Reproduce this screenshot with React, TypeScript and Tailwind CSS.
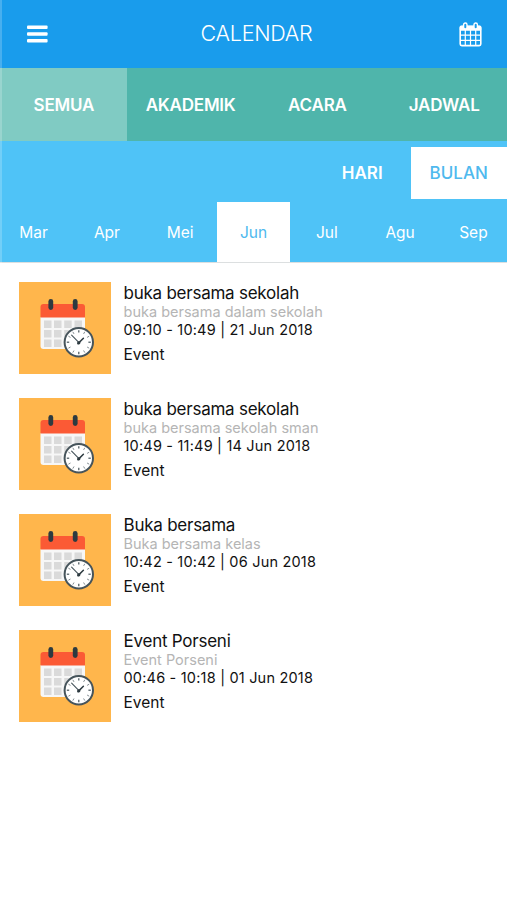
import { useState } from "react";
import { clsx } from "clsx";

interface EventItem {
  title: string;
  description: string;
  time: string;
  type: string;
}

const CATEGORIES = ["SEMUA", "AKADEMIK", "ACARA", "JADWAL"];
const RANGES = ["HARI", "BULAN"];
const MONTHS = ["Mar", "Apr", "Mei", "Jun", "Jul", "Agu", "Sep"];

const EVENTS: EventItem[] = [
  {
    title: "buka bersama sekolah",
    description: "buka bersama dalam sekolah",
    time: "09:10 - 10:49 | 21 Jun 2018",
    type: "Event",
  },
  {
    title: "buka bersama sekolah",
    description: "buka bersama sekolah sman",
    time: "10:49 - 11:49 | 14 Jun 2018",
    type: "Event",
  },
  {
    title: "Buka bersama",
    description: "Buka bersama kelas",
    time: "10:42 - 10:42 | 06 Jun 2018",
    type: "Event",
  },
  {
    title: "Event Porseni",
    description: "Event Porseni",
    time: "00:46 - 10:18 | 01 Jun 2018",
    type: "Event",
  },
];

function MenuIcon() {
  return (
    <svg width="21" height="18" viewBox="0 0 21 18" fill="currentColor">
      <rect x="0" y="0.4" width="20.6" height="3.6" rx="1" />
      <rect x="0" y="7.2" width="20.6" height="3.6" rx="1" />
      <rect x="0" y="14" width="20.6" height="3.6" rx="1" />
    </svg>
  );
}

function CalendarIcon() {
  return (
    <svg width="23" height="25" viewBox="0 0 23 25" fill="none" stroke="currentColor">
      <rect x="1.2" y="4.2" width="20.6" height="19.4" rx="1.6" strokeWidth="1.6" />
      <rect x="0.8" y="3.8" width="21.4" height="5" rx="1.2" fill="currentColor" stroke="none" />
      <path d="M6.3 8v15M11.5 8v15M16.7 8v15M1.5 13.2h20M1.5 18.3h20" strokeWidth="1.2" />
      <rect x="4.6" y="1" width="3.4" height="6" rx="1.7" fill="#199cec" strokeWidth="1.4" />
      <rect x="15" y="1" width="3.4" height="6" rx="1.7" fill="#199cec" strokeWidth="1.4" />
    </svg>
  );
}

function EventThumb() {
  const ticks = [0, 30, 60, 90, 120, 150, 180, 210, 240, 270, 300, 330];
  return (
    <svg width="92" height="92" viewBox="0 0 92 92" className="shrink-0 bg-[#ffb64c]">
      {/* calendar sheet */}
      <path d="M21.5 35h44.5v29a3 3 0 0 1-3 3h-38.5a3 3 0 0 1-3-3z" fill="#f7f7f7" />
      <path d="M21.5 35.5V25a3 3 0 0 1 3-3h38.5a3 3 0 0 1 3 3v10.5z" fill="#fb5a35" />
      {[38.5, 48, 57.5].map((y) =>
        [25, 35, 45.2, 55.5].map((x) => (
          <rect key={`${x}-${y}`} x={x} y={y} width="7.5" height="7.5" fill="#dadada" />
        ))
      )}
      <rect x="29.4" y="17" width="4.8" height="11" rx="2.4" fill="#2d3a40" />
      <rect x="53.8" y="17" width="4.8" height="11" rx="2.4" fill="#2d3a40" />
      {/* clock */}
      <circle cx="59.8" cy="60.2" r="14.2" fill="#fff" stroke="#46545b" strokeWidth="2" />
      {ticks.map((a) => (
        <path
          key={a}
          d="M59.8 48.2v2.4"
          stroke="#46545b"
          strokeWidth={a % 90 === 0 ? 1.2 : 0.6}
          transform={`rotate(${a} 59.8 60.2)`}
        />
      ))}
      <path d="M52.6 53.2l7.6 7.6" stroke="#46545b" strokeWidth="1.1" strokeLinecap="round" />
      <path d="M59 61.6l5.4-5.4" stroke="#2d3a40" strokeWidth="1.5" strokeLinecap="round" />
      <circle cx="59.8" cy="60.8" r="1.6" fill="#2d3a40" />
    </svg>
  );
}

function EventRow({ event }: { event: EventItem }) {
  return (
    <li className="flex h-[92px] gap-[12.5px]">
      <EventThumb />
      <div className="min-w-0 whitespace-nowrap">
        <h2 className="pt-px text-[17px] leading-[20px] tracking-[-0.24px]">{event.title}</h2>
        <p className="text-[14.5px] leading-[17px] text-[#b5b5b5]">{event.description}</p>
        <p className="pt-px text-[14.5px] leading-[18px] tracking-[0.2px]">{event.time}</p>
        <p className="mt-[6px] text-[15.5px] leading-[20px]">{event.type}</p>
      </div>
    </li>
  );
}

export default function App() {
  const [category, setCategory] = useState("SEMUA");
  const [range, setRange] = useState("BULAN");
  const [month, setMonth] = useState("Jun");

  return (
    <div className="relative min-h-[900px] w-[507px] overflow-hidden bg-white font-['Inter',sans-serif] text-[#111]">
      <header className="flex h-[68px] items-center justify-between bg-[#199cec] pr-[25px] pl-[27px] text-white">
        <button aria-label="Menu" className="w-[25px]">
          <MenuIcon />
        </button>
        <h1 className="pb-px pl-[2px] text-[21.5px] font-light tracking-[-0.25px]">CALENDAR</h1>
        <button aria-label="Calendar">
          <CalendarIcon />
        </button>
      </header>

      <nav className="grid h-[73px] grid-cols-4 bg-[#4fb5ab]">
        {CATEGORIES.map((item) => (
          <button
            key={item}
            onClick={() => setCategory(item)}
            className={clsx(
              "pt-[2px] pl-px text-[17px] font-semibold tracking-[-0.2px] text-white",
              item === category && "bg-[#80cbc3]"
            )}
          >
            {item}
          </button>
        ))}
      </nav>

      <section className="border-b border-[#dcdfe0] bg-[#4fc3f7]">
        <div className="flex justify-end pt-[6px] pb-[3px]">
          {RANGES.map((item) => (
            <button
              key={item}
              onClick={() => setRange(item)}
              className={clsx(
                "h-[52px] w-[96.5px] pt-px text-[17px]",
                item === range ? "bg-white font-medium text-[#4fb9ee]" : "font-semibold text-white"
              )}
            >
              {item}
            </button>
          ))}
        </div>
        <div className="flex h-[60px] justify-center overflow-hidden">
          {MONTHS.map((item) => (
            <button
              key={item}
              onClick={() => setMonth(item)}
              className={clsx(
                "w-[73.3px] shrink-0 pt-[2px] text-[15.5px]",
                item === month ? "bg-white text-[#4fb9ee]" : "text-white"
              )}
            >
              {item}
            </button>
          ))}
        </div>
      </section>

      <ul className="flex flex-col gap-6 px-[19px] pt-[19px]">
        {EVENTS.map((event, i) => (
          <EventRow key={i} event={event} />
        ))}
      </ul>

      {/* left screen edge */}
      <div className="pointer-events-none absolute top-0 left-0 h-[263px] w-[2px] bg-white/20" />
    </div>
  );
}
